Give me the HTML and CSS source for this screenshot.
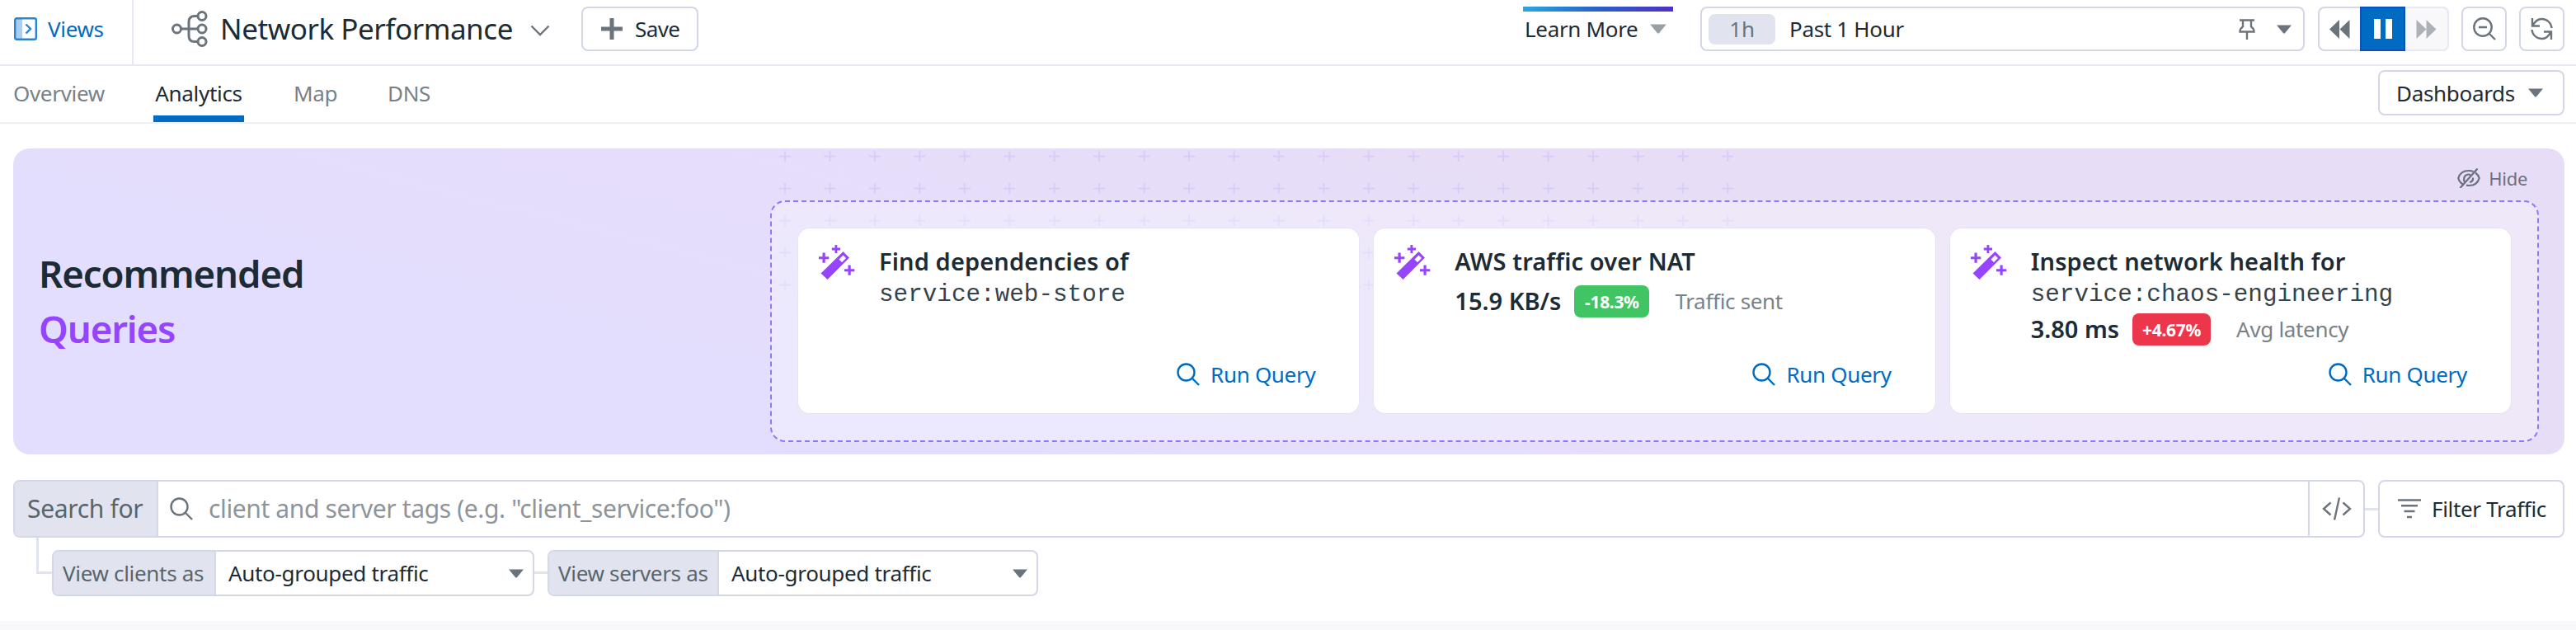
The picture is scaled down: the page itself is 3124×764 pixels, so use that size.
FILE: index.html
```html
<!DOCTYPE html>
<html lang="en">
<head>
<meta charset="utf-8">
<title>Network Performance</title>
<link rel="stylesheet" href="styles.css">
</head>
<body>
<svg width="0" height="0" class="defs">
  <symbol id="tri" viewBox="0 0 18 11"><path d="M0 .5h18L9.700 10.500h-1.400z" fill="currentColor"/></symbol>
  <symbol id="search" viewBox="0 0 28 28"><g fill="none" stroke="currentColor" stroke-width="2.400"><circle cx="11.500" cy="11.500" r="10"/><path d="M18.500 18.500L27 27"/></g></symbol>
  <symbol id="wand" viewBox="0 0 44 42"><g fill="currentColor"><path fill-rule="evenodd" d="M29.500 8L37 15.500L10.500 42L2.500 34.500zM29.500 12.500L24.500 17.500L28 21L33 16z"/><path d="M19.500 0h2.800v3.600h3.700v2.800h-3.700v3.600h-2.800v-3.600h-3.700v-2.800h3.700zM4.500 9.500h3.200v4.700h4.600v3h-4.600v4.600h-3.200v-4.600h-4.500v-3h4.500zM35.500 24.500h3.200v4.700h4.600v3h-4.600v4.600h-3.200v-4.600h-4.500v-3h4.500z"/></g></symbol>
</svg>

<header class="topbar">
  <a class="views">
    <svg width="28" height="28" viewBox="0 0 28 28"><rect x="1.200" y="1.200" width="25.600" height="25.600" rx="2" fill="none" stroke="currentColor" stroke-width="2.400"/><path d="M2 2h8v24H2z" fill="currentColor" opacity=".4"/><path d="M14.500 8.500l5.500 5.500l-5.500 5.500" fill="none" stroke="currentColor" stroke-width="2.400"/></svg>
    <span>Views</span>
  </a>
  <div class="title">
    <svg class="net" width="44" height="44" viewBox="0 0 44 44" fill="none" stroke="currentColor" stroke-width="3"><circle cx="6.500" cy="22" r="5"/><circle cx="37" cy="22" r="5"/><circle cx="37" cy="6.500" r="5"/><circle cx="37" cy="37.500" r="5"/><path d="M11.500 22H32M32 6.500h-4q-7 0-7 7v17q0 7 7 7h4"/></svg>
    <h1>Network Performance</h1>
    <svg class="chev" width="24" height="14" viewBox="0 0 24 14"><path d="M1.500 1.500L12 12L22.500 1.500" fill="none" stroke="currentColor" stroke-width="2.400"/></svg>
  </div>
  <button class="btn save"><svg width="26" height="26" viewBox="0 0 26 26"><path d="M13 0v26M0 13h26" stroke="#6b747c" stroke-width="5"/></svg><span>Save</span></button>
  <div class="learn"><span>Learn More</span><svg width="20" height="12"><use href="#tri"/></svg></div>
  <div class="time">
    <span class="chip">1h</span><span class="range">Past 1 Hour</span>
    <svg class="pin" width="20" height="25" viewBox="0 0 20 25" fill="none" stroke="currentColor" stroke-width="2.400"><path d="M1 1.500h18M5 2v8M15 2v8M5 9.500q-3.500 2-3.500 6h17q0-4-3.500-6M10 15.500V25"/></svg>
    <svg class="caret" width="18" height="11"><use href="#tri"/></svg>
  </div>
  <div class="player">
    <span><svg width="25" height="23" viewBox="0 0 25 23"><path d="M12 0v23L0 11.500zM24.500 0v23L12.500 11.500z" fill="#6b747c"/></svg></span>
    <span class="pause"><svg width="22" height="24" viewBox="0 0 22 24"><path d="M0 0h8v24H0zM14 0h8v24h-8z" fill="#fff"/></svg></span>
    <span class="off"><svg width="25" height="23" viewBox="0 0 25 23"><path d="M.5 0v23L12.500 11.500zM12.500 0v23L24.500 11.500z" fill="#adb2b8"/></svg></span>
  </div>
  <button class="btn sq"><svg width="28" height="28" viewBox="0 0 28 28" fill="none" stroke="currentColor" stroke-width="2.400"><circle cx="12" cy="12" r="10.700"/><path d="M19.500 19.500L27 27M7 12h10"/></svg></button>
  <button class="btn sq"><svg width="27" height="28" viewBox="0 0 27 28" fill="none" stroke="currentColor" stroke-width="2.400"><path d="M2 1v9.500h9M2.500 10.500C5 5 9 2 13.500 2C20 2 25 7 25.500 13M25 27v-9.500h-9M24.500 17.500C22 23 18 26 13.500 26C7 26 2 21 1.500 15"/></svg></button>
</header>

<nav class="tabs">
  <a class="t1">Overview</a><a class="t2 active">Analytics</a><a class="t3">Map</a><a class="t4">DNS</a>
  <button class="btn dash"><span>Dashboards</span><svg width="18" height="11"><use href="#tri"/></svg></button>
</nav>

<section class="banner">
  <svg class="plusses" width="1200" height="180">
    <defs><pattern id="pl" width="54.450" height="39" patternUnits="userSpaceOnUse"><path d="M7 0v13M0 6.500h14" stroke="#d8cdf9" stroke-width="2"/></pattern></defs>
    <rect width="1160" height="170" fill="url(#pl)"/>
  </svg>
  <h2>Recommended<br><em>Queries</em></h2>
  <div class="side">
    <div class="hide"><svg width="28" height="24" viewBox="0 0 28 24" fill="none" stroke="currentColor" stroke-width="2.200"><path d="M7.500 20C4 18 2 15 1.300 12C3 6 8 3 14 3q3 0 5.500 1M22 5.500Q25.500 8 26.700 12C25 18 20 21 14 21q-1.500 0-3-.3M8.500 16.500Q7 10 11.500 8Q14 7 16 8M19 11.500Q19.500 16 15 17M3.500 24L24.500 .5"/></svg><span>Hide</span></div>
    <div class="queries">
      <article class="card">
        <svg class="wand" width="44" height="42"><use href="#wand"/></svg>
        <div class="body"><h3>Find dependencies of</h3><code>service:web-store</code></div>
        <a class="run"><svg width="28" height="28"><use href="#search"/></svg><span>Run Query</span></a>
      </article>
      <article class="card">
        <svg class="wand" width="44" height="42"><use href="#wand"/></svg>
        <div class="body"><h3>AWS traffic over NAT</h3><p class="v2"><b>15.9 KB/s</b><i class="good">-18.3%</i><span>Traffic sent</span></p></div>
        <a class="run"><svg width="28" height="28"><use href="#search"/></svg><span>Run Query</span></a>
      </article>
      <article class="card">
        <svg class="wand" width="44" height="42"><use href="#wand"/></svg>
        <div class="body"><h3>Inspect network health for</h3><code>service:chaos-engineering</code><p class="v3"><b>3.80 ms</b><i class="bad">+4.67%</i><span>Avg latency</span></p></div>
        <a class="run"><svg width="28" height="28"><use href="#search"/></svg><span>Run Query</span></a>
      </article>
    </div>
  </div>
</section>

<div class="searchrow">
  <div class="searchbox">
    <span class="label">Search for</span>
    <svg class="mag" width="28" height="28"><use href="#search"/></svg>
    <span class="ph">client and server tags (e.g. "client_service:foo")</span>
    <span class="code"><svg width="36" height="28" viewBox="0 0 36 28" fill="none" stroke="currentColor" stroke-width="2.400"><path d="M10.500 6.500L2 14l8.500 7.500M25.500 6.500L34 14l-8.500 7.500M21 .5l-6 27"/></svg></span>
  </div>
  <i class="link"></i>
  <button class="btn filter"><svg width="28" height="24" viewBox="0 0 28 24"><path d="M0 1.500h28M4 8.300h20M7.500 15h13M11 22h6" stroke="#6b747c" stroke-width="2.600"/></svg><span>Filter Traffic</span></button>
</div>

<div class="viewrow">
  <i class="elbow"></i>
  <div class="select s1"><span class="label">View clients as</span><span class="val">Auto-grouped traffic</span><svg width="18" height="11"><use href="#tri"/></svg></div>
  <i class="link"></i>
  <div class="select s2"><span class="label">View servers as</span><span class="val">Auto-grouped traffic</span><svg width="18" height="11"><use href="#tri"/></svg></div>
</div>
<div class="foot"></div>
</body>
</html>
```

FILE: styles.css
```css
* { box-sizing: border-box; }
body { margin: 0; width: 3124px; height: 764px; overflow: hidden; background: #fff; color: #1c2b34; font: 26px/36px "Noto Sans", sans-serif; letter-spacing: -.32px; display: flex; flex-direction: column; }
h1, h2, h3, p { margin: 0; font-weight: 400; }
i, em { font-style: normal; }
svg { display: block; flex: none; color: #6b747c; }
span { white-space: nowrap; }
.defs { position: absolute; }
.btn { font: inherit; letter-spacing: inherit; color: inherit; background: #fff; border: 2px solid #d3d7e8; border-radius: 8px; padding: 0; height: 54px; display: flex; align-items: center; flex: none; }

.topbar { height: 80px; flex: none; border-bottom: 2px solid #e8e9f2; display: flex; padding-right: 14px; }
.topbar > .btn, .time, .player { margin-top: 8px; }
.views { width: 162px; border-right: 2px solid #e8e9f2; display: flex; align-items: center; padding: 0 0 8px 17px; gap: 13px; color: #006bc2; }
.views svg { color: #2b84d0; }
.title { display: flex; align-items: center; padding: 0 0 8px 46px; width: 543px; }
.title h1 { font-size: 35px; letter-spacing: -.45px; margin-left: 15px; flex: none; width: 358px; white-space: nowrap; }
.chev { margin-left: 18px; margin-top: 3px; }
.save { width: 142px; padding-left: 22px; gap: 15px; }
.save span { letter-spacing: -.6px; }
.learn { margin: 8px 0 0 auto; width: 182px; height: 54px; border-top: 6px solid; border-image: linear-gradient(90deg, #2aa9e0, #2860c8 50%, #5030c8) 1; display: flex; align-items: center; justify-content: space-between; padding: 0 8px 6px 2px; }
.learn svg { color: #989fa5; }
.time { margin-left: 33px; width: 733px; height: 54px; border: 2px solid #d3d7e8; border-radius: 8px; display: flex; align-items: center; padding: 0 14px 0 8px; }
.chip { width: 81px; height: 37px; border-radius: 8px; background: #e1e4ee; color: #6b747c; text-align: center; }
.range { margin-left: 17px; }
.pin { margin-left: auto; }
.caret { margin-left: 26px; }
.player { margin-left: 16px; width: 159px; height: 54px; border: 2px solid #d3d7e8; border-radius: 8px; display: flex; }
.player span { display: flex; align-items: center; justify-content: center; width: 50px; }
.player .pause { width: 56px; background: #006bc2; border: 2px solid #0c50c4; margin: -2px 0; }
.player .off { width: 54px; background: #f8f8fb; margin: -2px -2px -2px 0; border: 2px solid #e8eaf3; border-left: 0; border-radius: 0 8px 8px 0; }
.sq { width: 55px; justify-content: center; margin-left: 15px; }

.tabs { height: 70px; flex: none; border-bottom: 2px solid #eceef5; display: flex; padding: 0 14px 0 16px; color: #798188; }
.tabs a { line-height: 66px; height: 68px; }
.t1 { width: 170px; }
.t2 { width: 110px; text-align: center; }
.t3 { margin-left: 60px; width: 114px; }
.active { color: #1c2b34; border-bottom: 8px solid #006bc2; }
.dash { margin: 5px 0 0 auto; width: 226px; height: 55px; color: #1c2b34; padding: 0 24px 0 20px; justify-content: space-between; }

.banner { position: relative; margin: 30px 14px 0 16px; height: 371px; flex: none; border-radius: 20px; overflow: hidden; background: linear-gradient(15deg, #e3defe 20%, #e8ddf6 80%); display: flex; }
.plusses { position: absolute; left: 929px; top: 3px; }
.banner h2 { font-size: 45.500px; letter-spacing: -1.100px; font-weight: 600; line-height: 67px; padding: 118px 0 0 31px; width: 918px; }
.banner em { color: #9644ff; }
.side { position: relative; width: 2145px; }
.hide { height: 63px; padding: 9px 14px 0 0; display: flex; align-items: center; justify-content: flex-end; gap: 10px; font-size: 22px; color: #6b6f80; }
.hide svg { color: #6b6f80; }
.queries { height: 293px; border: 2px dashed #9377fa; border-radius: 18px; background: rgba(255,255,255,.32); padding: 32px; display: flex; gap: 18px; }
.card { flex: 1; background: #fff; border-radius: 14px; box-shadow: 0 0 0 1px #e6e3f2; height: 224px; position: relative; display: flex; padding: 20px 25px; }
.wand { color: #9644ff; }
.body { margin-left: 29px; }
.card h3 { font-size: 29px; letter-spacing: .12px; font-weight: 600; line-height: 40px; white-space: nowrap; }
.card code { display: block; margin: 3px 0 3px; letter-spacing: 0; font: 29.300px/36px "Liberation Mono", monospace; color: #35434b; }
.card p { display: flex; align-items: center; height: 40px; }
.card b { font-size: 29px; letter-spacing: 0; font-weight: 600; }
.v2 { margin-top: 8px; }
.card i { height: 39px; line-height: 40px; border-radius: 8px; color: #fff; font-size: 21px; font-weight: 700; text-align: center; margin: 0 31px 0 16px; }
.good { width: 91px; background: #41c464; }
.bad { width: 95px; background: #eb364b; }
.card p span { color: #798188; }
.run { position: absolute; right: 53px; bottom: 29px; display: flex; align-items: center; gap: 13px; color: #006bc2; }
.run svg { color: #006bc2; }

.searchrow { margin: 31px 14px 0 16px; height: 70px; flex: none; display: flex; align-items: center; }
.searchbox { flex: 1; height: 70px; border: 2px solid #d3d7e8; border-radius: 8px; display: flex; align-items: center; font-size: 30px; overflow: hidden; }
.label { flex: none; align-self: stretch; background: #e1e4ee; border-right: 2px solid #d3d7e8; color: #59646c; display: flex; align-items: center; }
.searchbox .label { width: 174px; padding-left: 15px; }
.mag { margin-left: 14px; }
.ph { margin-left: 19px; color: #8d959b; letter-spacing: -.380px; }
.code { margin-left: auto; width: 67px; align-self: stretch; border-left: 2px solid #d3d7e8; display: flex; align-items: center; justify-content: center; }
.link { width: 16px; height: 3px; background: #e1e4ee; }
.filter { width: 226px; height: 70px; padding-left: 22px; gap: 13px; }

.viewrow { height: 70px; flex: none; display: flex; align-items: center; padding: 15px 0 0 44px; }
.elbow { width: 19px; height: 44px; border: solid #e1e4ee; border-width: 0 0 3px 3px; align-self: flex-start; margin-top: -15px; }
.select { height: 56px; border: 2px solid #d3d7e8; border-radius: 8px; display: flex; align-items: center; overflow: hidden; }
.s1 { width: 585px; }
.s2 { width: 595px; }
.select .label { padding-left: 11px; width: 197px; }
.s2 .label { width: 206px; }
.select .val { margin-left: 15px; }
.select svg { margin: 2px 11px 0 auto; }
.foot { margin-top: 31px; height: 12px; background: #f8f8fb; }
```
